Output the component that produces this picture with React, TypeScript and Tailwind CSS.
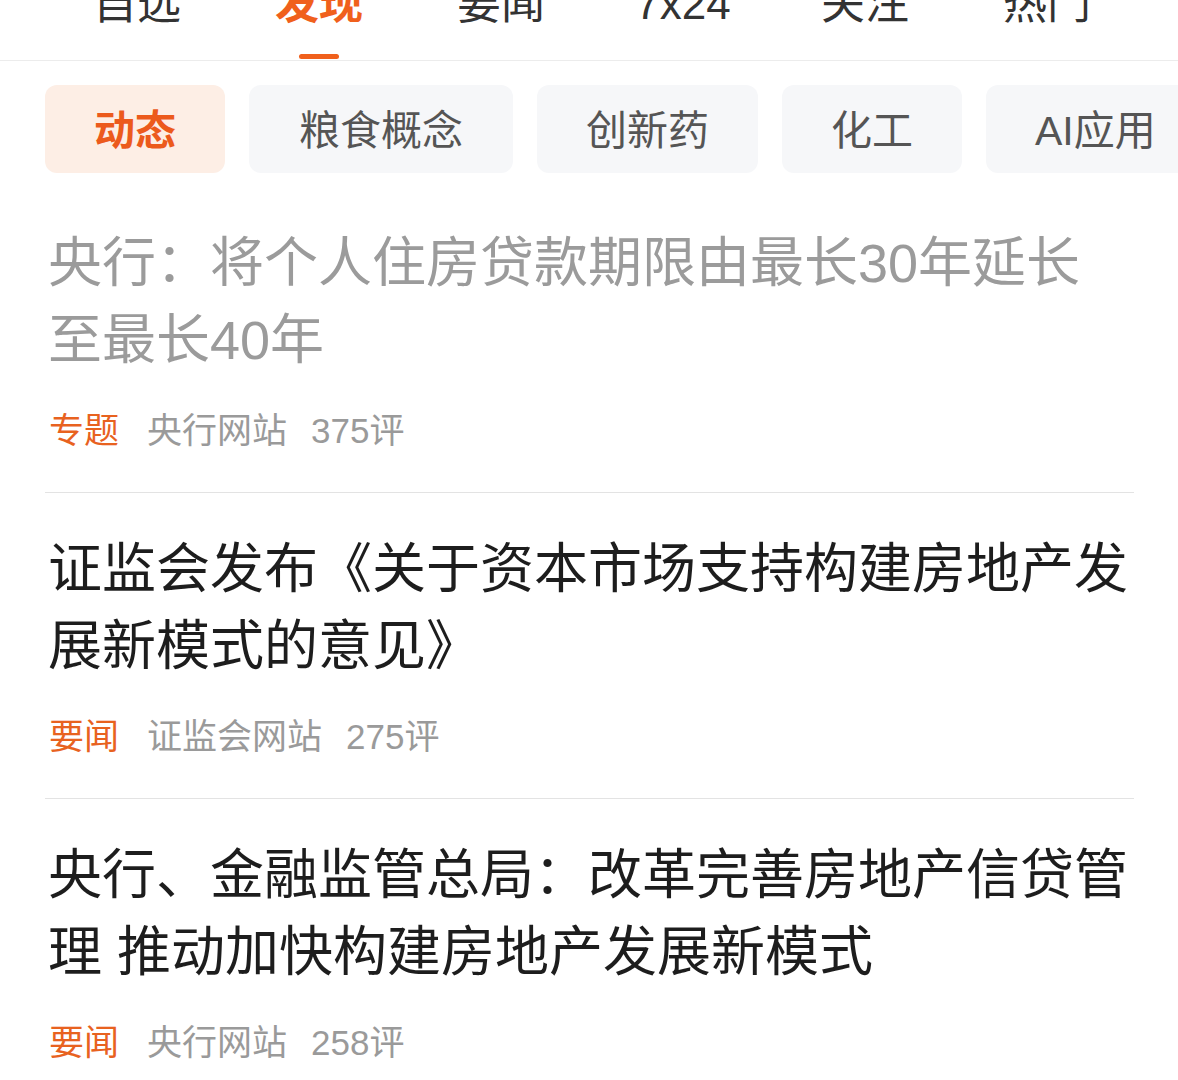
const TABS = ['自选', '发现', '要闻', '7x24', '关注', '热门']

const CHIPS = ['动态', '粮食概念', '创新药', '化工', 'AI应用']

interface Article {
  title: string
  tag: string
  source: string
  comments: number
  read?: boolean
}

const ARTICLES: Article[] = [
  { title: '央行：将个人住房贷款期限由最长30年延长至最长40年', tag: '专题', source: '央行网站', comments: 375, read: true },
  { title: '证监会发布《关于资本市场支持构建房地产发展新模式的意见》', tag: '要闻', source: '证监会网站', comments: 275 },
  { title: '央行、金融监管总局：改革完善房地产信贷管理 推动加快构建房地产发展新模式', tag: '要闻', source: '央行网站', comments: 258 },
]

export default function App() {
  return (
    <div className="w-[1178px] h-[1080px] overflow-hidden bg-white font-['Liberation_Sans','Noto_Sans_CJK_SC',sans-serif]">
      {/* top tabs, scrolled partly out of view */}
      <div className="h-[61px] border-b border-[#ececec] overflow-hidden">
        <div className="flex pl-[46px] -mt-[18px]">
          {TABS.map((t, i) => (
            <div key={t} className="w-[182px] flex flex-col items-center">
              <span
                className={
                  i === 1
                    ? 'text-[44px] leading-[44px] font-bold text-[#f0601c]'
                    : 'text-[44px] leading-[44px] text-[#333]'
                }
              >
                {t}
              </span>
              {i === 1 && <div className="mt-[28px] w-[40px] h-[5px] rounded-full bg-[#f0601c]" />}
            </div>
          ))}
        </div>
      </div>

      {/* channel chips */}
      <div className="flex gap-[24px] pl-[45px] pt-[24px] whitespace-nowrap">
        {CHIPS.map((c, i) => (
          <div
            key={c}
            className={
              i === 0
                ? 'shrink-0 h-[88px] px-[49px] pt-[6px] rounded-[12px] bg-[#fdeee5] flex items-center text-[41px] font-bold text-[#ec5a1c]'
                : i === 1
                  ? 'shrink-0 h-[88px] px-[50px] pt-[6px] rounded-[12px] bg-[#f6f7f9] flex items-center text-[41px] text-[#555]'
                  : 'shrink-0 h-[88px] px-[49px] pt-[6px] rounded-[12px] bg-[#f6f7f9] flex items-center text-[41px] text-[#555]'
            }
          >
            {c}
          </div>
        ))}
      </div>

      {/* article list */}
      <div className="pl-[45px] pr-[44px]">
        {ARTICLES.map((a, i) => (
          <div
            key={a.title}
            className={i === 0 ? 'pt-[52px] pb-[41px] border-b border-[#e3e3e3]' : 'pt-[38px] pb-[41px] border-b border-[#e3e3e3]'}
          >
            <h2
              className={
                a.read
                  ? 'text-[54px] leading-[77px] font-normal text-[#9b9b9b] pl-[3px]'
                  : 'text-[54px] leading-[77px] font-normal text-[#1d1d1d] pl-[3px]'
              }
            >
              {a.title}
            </h2>
            <div className="mt-[32px] flex items-center gap-[28px] pl-[4px] text-[35px] leading-[40px]">
              <span className="text-[#e8621f]">{a.tag}</span>
              <span className="text-[#9a9a9a]">{a.source}</span>
              <span className="text-[#9a9a9a] -ml-[4px]">{a.comments}评</span>
            </div>
          </div>
        ))}
      </div>
    </div>
  )
}
